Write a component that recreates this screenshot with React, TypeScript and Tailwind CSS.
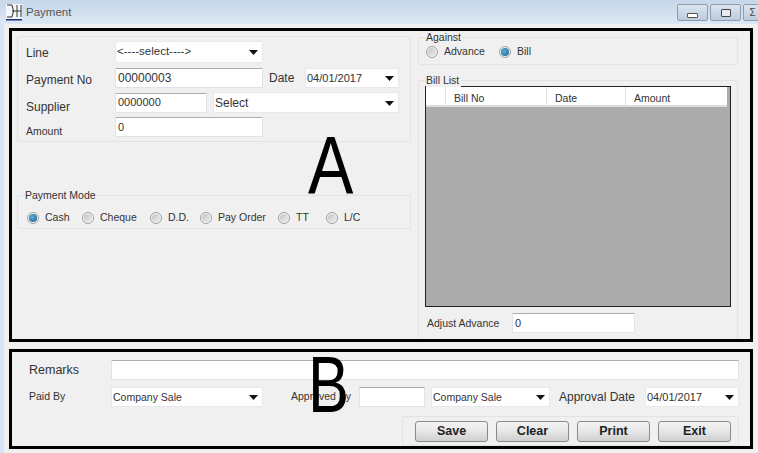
import React from "react";

const Arrow = () => (
  <svg width="9" height="5" viewBox="0 0 9 5" className="absolute right-[4px] top-1/2 -mt-[2px]">
    <path d="M0 0H9L4.5 5Z" fill="#111" />
  </svg>
);

const Input = ({ className = "", value = "", text = "text-[12px]" }: { className?: string; value?: string; text?: string }) => (
  <div className={`bg-white border border-[#e2e3ea] border-t-[#abadb3] rounded-[1px] pl-[2px] flex items-center text-[#333] leading-none ${text} ${className}`}>
    {value}
  </div>
);

const Select = ({ className = "", value = "", text = "text-[11.5px]" }: { className?: string; value?: string; text?: string }) => (
  <div className={`relative bg-white border border-[#e8e8ec] rounded-[1px] pl-[1px] flex items-center text-[#333] leading-none ${text} ${className}`}>
    {value}
    <Arrow />
  </div>
);

const Radio = ({ checked = false }: { checked?: boolean }) => (
  <span className="w-[12px] h-[12px] rounded-full border border-[#a0a0a0] bg-[#f4f4f4] flex items-center justify-center shrink-0">
    {checked ? <span className="w-[8px] h-[8px] rounded-full bg-[radial-gradient(circle_at_40%_40%,#5fb0e0,#135a86)]" /> : <span className="w-[8px] h-[8px] rounded-full bg-gradient-to-br from-[#c4c4c4] to-[#ececec]" />}
  </span>
);

const Option = ({ label, checked, className = "" }: { label: string; checked?: boolean; className?: string }) => (
  <div className={`flex items-center gap-[6px] text-[10.5px] text-[#333] ${className}`}>
    <Radio checked={checked} />
    <span>{label}</span>
  </div>
);

const Group = ({ className = "", legend, children }: { className?: string; legend?: string; children: React.ReactNode }) => (
  <div className={`relative border border-[#e3e3e3] rounded-[2px] ${className}`}>
    {legend && (
      <span className="absolute left-[7px] -top-[7px] bg-[#f0f0f0] pr-[2px] text-[10.5px] leading-[13px] text-[#333]">{legend}</span>
    )}
    {children}
  </div>
);

const Btn = ({ label }: { label: string }) => (
  <div className="w-[73px] h-[21px] border border-[#8a8a8a] rounded-[3px] bg-gradient-to-b from-[#f4f4f4] via-[#e6e6e6] to-[#cfcfcf] flex items-center justify-center text-[12.5px] font-bold text-[#222]">
    {label}
  </div>
);

const WinBtn = ({ children, className = "" }: { children?: React.ReactNode; className?: string }) => (
  <div className={`h-[17px] border border-[#8b9bb0] rounded-[2px] bg-gradient-to-b from-[#dbe5f0] to-[#bccbdc] flex items-center justify-center shrink-0 ${className}`}>
    {children}
  </div>
);

export default function App() {
  return (
    <div className="relative w-[758px] h-[453px] overflow-hidden bg-[#f0f0f0] flex flex-col font-['Liberation_Sans',Arial,sans-serif]">
      <div className="h-[24px] shrink-0 bg-gradient-to-b from-[#c6d7e9] to-[#dce8f4] flex items-start pl-[6px]">
        <svg width="17" height="17" viewBox="0 0 17 17" className="mt-[4px]">
          <rect x="0" y="0" width="16" height="15" fill="#f4f7fb" />
          <rect x="0" y="15" width="16" height="1.5" fill="#1c2a78" />
          <path d="M1 1H6Q9 7 6 13H1M6 7H11M11 1V13M15 1V13M11 7H15" fill="none" stroke="#333" strokeWidth="1" />
        </svg>
        <span className="ml-[3px] mt-[5px] text-[11.5px] leading-[14px] text-[#555]">Payment</span>
        <div className="ml-auto flex gap-[2px] mt-[4px] w-[81px]">
          <WinBtn className="w-[31px]">
            <span className="w-[11px] h-[5px] mt-[5px] border border-[#555] rounded-[1px] bg-white" />
          </WinBtn>
          <WinBtn className="w-[31px]">
            <span className="w-[10px] h-[8px] border border-[#444] rounded-[1px] bg-[#e4ebf3]" />
          </WinBtn>
          <WinBtn className="w-[30px] text-[10px] text-[#444] pr-[11px]">Σ</WinBtn>
        </div>
      </div>
      <div className="flex-1 flex">
        <div className="w-[4px] bg-[#d5e5f5]" />
        <div className="w-[5px]" />
        <div className="w-[744px]">
          <div className="relative mt-[4px] h-[314px] border-[3px] border-black flex overflow-hidden">
            <div className="ml-[5px] w-[394px]">
              <Group className="mt-[5px] h-[106px] pt-[4px]">
                <div className="flex items-center h-[22px]">
                  <span className="ml-[8px] w-[89px] mt-[1px] text-[12px] text-[#333]">Line</span>
                  <Select className="w-[148px] h-[22px]" value="<----select---->" />
                </div>
                <div className="flex items-center h-[20px] mt-[5px]">
                  <span className="ml-[8px] w-[89px] mt-[4px] text-[12px] text-[#333]">Payment No</span>
                  <Input className="w-[148px] h-[20px]" value="00000003" />
                  <span className="ml-[6px] w-[36px] text-[12px] text-[#333]">Date</span>
                  <Select className="w-[94px] h-[20px]" value="04/01/2017" text="text-[11px]" />
                </div>
                <div className="flex items-center h-[21px] mt-[4px]">
                  <span className="ml-[8px] w-[89px] text-[12px] text-[#333] mt-[9px]">Supplier</span>
                  <Input className="w-[92px] h-[20px]" value="0000000" text="text-[11px]" />
                  <Select className="ml-[6px] w-[186px] h-[21px]" value="Select" text="text-[12px]" />
                </div>
                <div className="flex items-center h-[20px] mt-[4px]">
                  <span className="ml-[8px] w-[89px] text-[10.5px] text-[#333] mt-[9px]">Amount</span>
                  <Input className="w-[148px] h-[20px]" value="0" text="text-[11px]" />
                </div>
              </Group>
              <Group legend="Payment Mode" className="mt-[53px] h-[34px] flex items-center pl-[9px] pt-[12px]">
                <Option label="Cash" checked className="w-[55px]" />
                <Option label="Cheque" className="w-[68px]" />
                <Option label="D.D." className="w-[50px]" />
                <Option label="Pay Order" className="w-[78px]" />
                <Option label="TT" className="w-[48px]" />
                <Option label="L/C" />
              </Group>
            </div>
            <div className="ml-[7px] w-[320px]">
              <Group legend="Against" className="mt-[6px] h-[28px] flex items-center pl-[7px] pt-[1px]">
                <Option label="Advance" className="w-[73px]" />
                <Option label="Bill" checked />
              </Group>
              <Group legend="Bill List" className="mt-[15px] h-[280px] px-[6px] pt-[5px]">
                <div className="w-[306px] h-[221px] border border-[#222] bg-[#ababab]">
                  <div className="h-[20px] bg-white border-b-2 border-[#dcdcdc] flex text-[10.5px] leading-[22px] text-[#333] mr-[3px]">
                    <div className="w-[20px] border-r border-[#e0e0e0]" />
                    <div className="w-[101px] pl-[8px] border-r border-[#e0e0e0]">Bill No</div>
                    <div className="w-[79px] pl-[8px] border-r border-[#e0e0e0]">Date</div>
                    <div className="flex-1 pl-[8px]">Amount</div>
                  </div>
                </div>
                <div className="flex items-center mt-[6px] h-[20px]">
                  <span className="ml-[2px] w-[85px] mt-[2px] text-[10.5px] text-[#333]">Adjust Advance</span>
                  <Input className="w-[123px] h-[20px]" value="0" text="text-[11px]" />
                </div>
              </Group>
            </div>
            <span className="absolute left-[296px] top-[88px] text-[81px] leading-[92px] text-black origin-left scale-x-[0.84]">A</span>
          </div>
          <div className="relative mt-[7px] h-[100px] border-[3px] border-black">
            <div className="flex items-center h-[20px] mt-[8px]">
              <span className="ml-[17px] w-[82px] text-[12.5px] text-[#333]">Remarks</span>
              <Input className="w-[628px] h-[20px]" />
            </div>
            <div className="flex items-center h-[20px] mt-[7px]">
              <span className="ml-[17px] w-[82px] text-[10.5px] text-[#333]">Paid By</span>
              <Select className="w-[152px] h-[20px]" value="Company Sale" text="text-[10.5px]" />
              <span className="ml-[28px] w-[68px] text-[10.5px] text-[#333]">Approved By</span>
              <Input className="w-[66px] h-[20px]" />
              <Select className="ml-[6px] w-[119px] h-[20px]" value="Company Sale" text="text-[10.5px]" />
              <span className="ml-[9px] w-[86px] text-[12px] text-[#333]">Approval Date</span>
              <Select className="w-[94px] h-[20px]" value="04/01/2017" text="text-[11px]" />
            </div>
            <div className="ml-[390px] mt-[9px] w-[337px] h-[30px] border border-[#e3e3e3] rounded-[2px] flex items-center gap-[8px] pl-[12px]">
              <Btn label="Save" />
              <Btn label="Clear" />
              <Btn label="Print" />
              <Btn label="Exit" />
            </div>
            <span className="absolute left-[296px] top-[-2px] text-[79px] leading-[70px] text-black origin-left scale-x-[0.78]">B</span>
          </div>
        </div>
      </div>
    </div>
  );
}
